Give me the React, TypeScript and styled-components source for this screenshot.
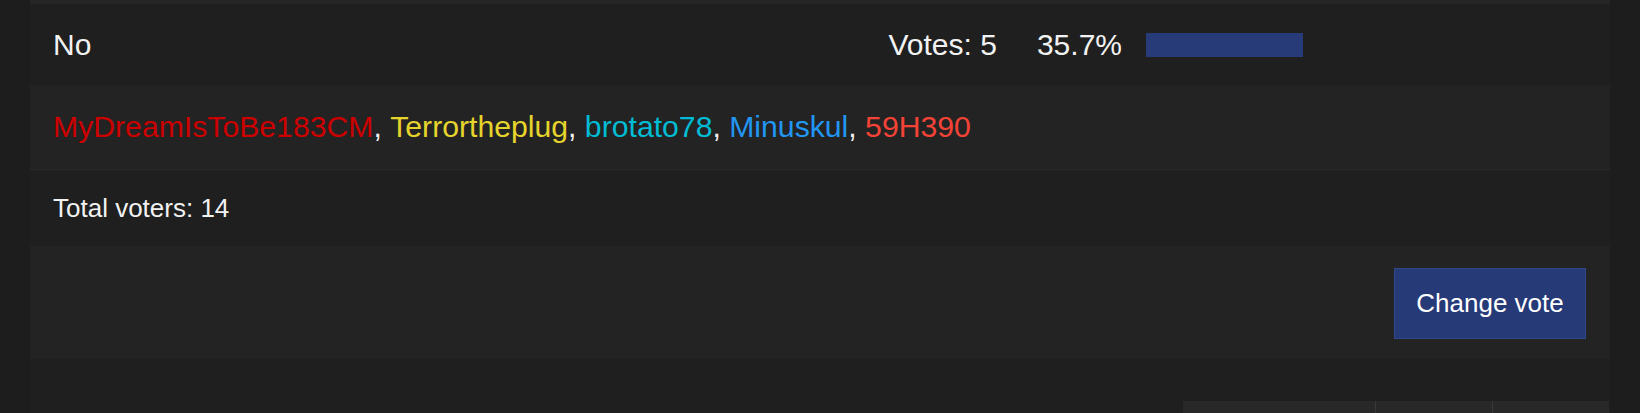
import styled, { createGlobalStyle } from "styled-components";

const GlobalStyle = createGlobalStyle`
  body {
    margin: 0;
    background: #1d1d1d;
    font-family: "Liberation Sans", Arial, Helvetica, sans-serif;
    color: #f2f2f2;
  }
`;

const Page = styled.div`
  height: 413px;
  padding: 0 30px;
  overflow: hidden;
`;

const Container = styled.div`
  background: #1f1f1f;
  height: 100%;
`;

const TopEdge = styled.div`
  height: 4px;
  background: #252525;
`;

const Row = styled.div<{ shaded?: boolean; height: number }>`
  display: flex;
  align-items: center;
  height: ${({ height }) => height}px;
  box-sizing: border-box;
  padding: 0 24px 0 23px;
  background: ${({ shaded }) => (shaded ? "#232323" : "transparent")};
`;

const OptionRow = styled(Row)`
  font-size: 30px;
`;

const OptionLabel = styled.div`
  flex: 1;
`;

const Votes = styled.div`
  margin-right: 40px;
`;

const Percent = styled.div`
  margin-right: 24px;
`;

const Track = styled.div`
  width: 440px;
  height: 24px;
`;

const Fill = styled.div`
  height: 100%;
  background: #263b77;
`;

const VoterRow = styled(Row)`
  font-size: 30.2px;
  border-bottom: 1px solid #282828;
  white-space: pre;
`;

const Voter = styled.span<{ color: string }>`
  color: ${({ color }) => color};
`;

const TotalRow = styled(Row)`
  font-size: 26px;
`;

const ActionRow = styled(Row)`
  align-items: flex-start;
  justify-content: flex-end;
  padding-top: 22px;
`;

const Button = styled.button`
  width: 192px;
  height: 71px;
  box-sizing: border-box;
  background: #263a77;
  border: 1px solid #2f4889;
  color: #ffffff;
  font-family: inherit;
  font-size: 26px;
  padding: 0;
  cursor: pointer;
`;

const Pager = styled.div`
  display: flex;
  justify-content: flex-end;
  margin-top: 42px;
  padding-right: 1px;
`;

const PagerCell = styled.div<{ width: number }>`
  width: ${({ width }) => width}px;
  height: 40px;
  background: #282828;
  & + & {
    border-left: 1px solid #383838;
  }
`;

const voters = [
  { name: "MyDreamIsToBe183CM", color: "#cc0000" },
  { name: "Terrortheplug", color: "#e6d42c" },
  { name: "brotato78", color: "#00bcd4" },
  { name: "Minuskul", color: "#2196f3" },
  { name: "59H390", color: "#f44336" },
];

export default function App() {
  const percent = 35.7;

  return (
    <>
      <GlobalStyle />
      <Page>
        <Container>
          <TopEdge />
          <OptionRow height={81}>
            <OptionLabel>No</OptionLabel>
            <Votes>Votes: 5</Votes>
            <Percent>{percent}%</Percent>
            <Track>
              <Fill style={{ width: `${percent}%` }} />
            </Track>
          </OptionRow>
          <VoterRow height={85} shaded>
            {voters.map((v, i) => (
              <span key={v.name}>
                <Voter color={v.color}>{v.name}</Voter>
                {i < voters.length - 1 ? ", " : ""}
              </span>
            ))}
          </VoterRow>
          <TotalRow height={76}>Total voters: 14</TotalRow>
          <ActionRow height={113} shaded>
            <Button>Change vote</Button>
          </ActionRow>
          <Pager>
            <PagerCell width={192} />
            <PagerCell width={116} />
            <PagerCell width={116} />
          </Pager>
        </Container>
      </Page>
    </>
  );
}
